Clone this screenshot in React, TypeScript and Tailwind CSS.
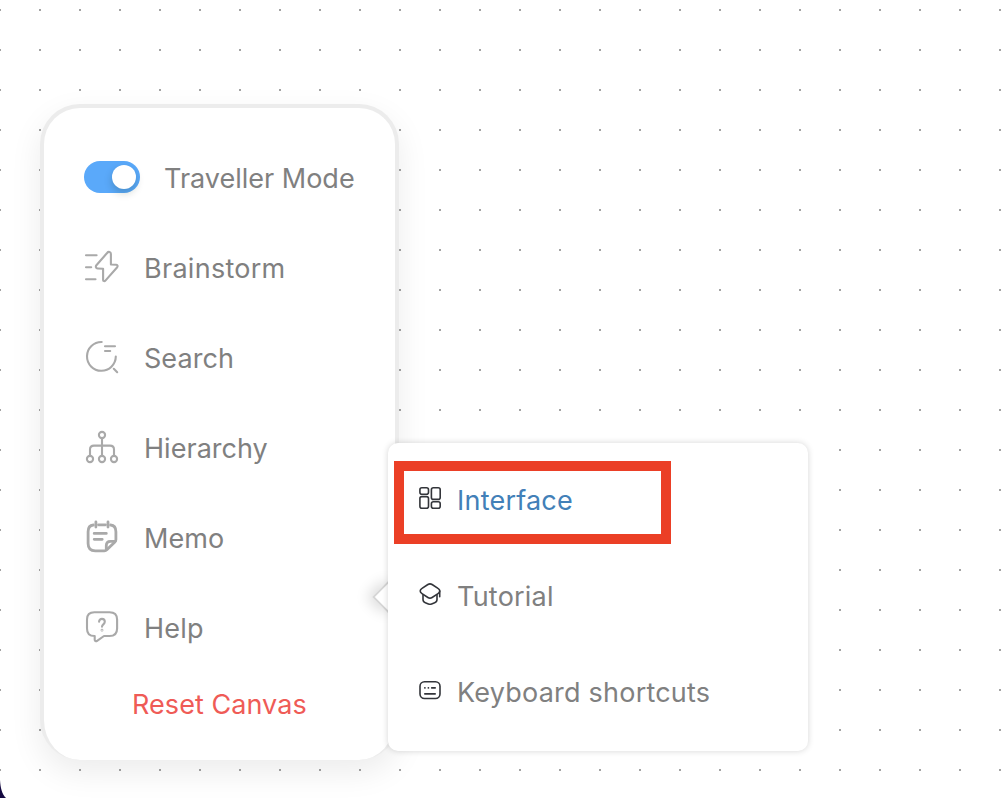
import type { ReactNode } from "react";

function Icon({ children, width = 2.1 }: { children: ReactNode; width?: number }) {
  return (
    <svg
      className="size-9 shrink-0"
      viewBox="0 0 36 36"
      fill="none"
      stroke="#a9a9a9"
      strokeWidth={width}
      strokeLinecap="round"
      strokeLinejoin="round"
    >
      {children}
    </svg>
  );
}

function BrainstormIcon() {
  return (
    <Icon>
      <path d="M2 6.2H12.6M2 18.2H7.2M2 30.2H11.5" />
      <path d="M23.1 4 12.4 16.2C11.4 17.5 11.8 19.4 13.6 19.5L19.1 19.8V31C19.1 32.2 20.6 32.5 21.4 31.6L33 18.5C34 17.3 33.8 15.9 32.2 15.8L26.9 15.5V5C26.9 2.8 24.5 2.2 23.1 4Z" />
    </Icon>
  );
}

function SearchIcon() {
  return (
    <Icon>
      <path d="M17.7 3A14.4 14.4 0 1 0 31.8 17.6" />
      <path d="M21 7.2H31M21 12H26.2M29.8 29.8 33.2 33.2" />
    </Icon>
  );
}

function HierarchyIcon() {
  return (
    <Icon>
      <circle cx="18" cy="6" r="3.1" />
      <circle cx="6" cy="30" r="3.1" />
      <circle cx="18" cy="30" r="3.1" />
      <circle cx="30" cy="30" r="3.1" />
      <path d="M18 9.1V26.9M6 26.9V20.5Q6 16.6 10 16.6H26Q30 16.6 30 20.5V26.9" />
    </Icon>
  );
}

function MemoIcon() {
  return (
    <Icon width={2.8}>
      <g transform="translate(0 0.8)">
        <path d="M11.9 2.2V7.2M24 2.2V7.2M10.2 13.6H22.3M10.2 19.5H18.2" />
        <path d="M14.5 5H21.5M9.3 5.2C5.9 5.5 4.1 8 4.1 12V23.7C4.1 28.7 6.4 31 11.3 31H20.4C21.6 31 22.3 30.5 23.1 29.7L30.9 22.1C31.5 21.5 31.9 20.6 31.9 19.6V12C31.9 8 30 5.5 26.6 5.2" />
        <path d="M22.3 29.8V25.7C22.3 23 23.6 21.5 26.4 21.5H30.9" />
      </g>
    </Icon>
  );
}

function HelpIcon() {
  return (
    <Icon>
      <path d="M10.4 3.2H25.5C30.8 3.2 33.1 5.6 33.1 10.6V19.4C33.1 24.6 30.8 27 25.5 27H20L13.1 31.8C12 32.6 10.7 32 10.7 30.7V27C5.3 27 3 24.6 3 19.4V10.6C3 5.6 5.3 3.2 10.4 3.2Z" />
      <path d="M15.1 12.8C15.1 8.9 20.8 9 20.8 12.8C20.8 15.3 18 15.4 18 17.7" />
      <circle cx="18" cy="21.2" r="0.35" />
    </Icon>
  );
}

function DarkIcon({ children }: { children: ReactNode }) {
  return (
    <svg
      className="size-6 shrink-0"
      viewBox="0 0 24 24"
      fill="none"
      stroke="#33353a"
      strokeWidth="1.6"
      strokeLinecap="round"
      strokeLinejoin="round"
    >
      {children}
    </svg>
  );
}

function InterfaceIcon() {
  return (
    <DarkIcon>
      <rect x="1.9" y="1.7" width="8.6" height="6.5" rx="2" />
      <rect x="13.4" y="1.7" width="8.8" height="11.7" rx="2" />
      <rect x="1.9" y="10.6" width="8.6" height="11.7" rx="2" />
      <rect x="13.4" y="15.7" width="8.8" height="6.6" rx="2" />
    </DarkIcon>
  );
}

function TutorialIcon() {
  return (
    <DarkIcon>
      <path d="M9.9 2.5 4 6.4C1.6 7.9 1.6 10.1 4 11.7L9.9 15.5C11.3 16.4 12.7 16.4 14.1 15.5L20 11.7C22.4 10.1 22.4 7.9 20 6.4L14.1 2.5C12.7 1.6 11.3 1.6 9.9 2.5Z" />
      <path d="M5 12.8V17.5C5 19 5.9 20.2 7.3 20.7L10.4 21.9Q12 22.5 13.6 21.9L16.7 20.7C18.1 20.2 19 19 19 17.5V12.8M21.7 14.8V9" />
    </DarkIcon>
  );
}

function KeyboardIcon() {
  return (
    <DarkIcon>
      <rect x="2" y="3.7" width="20" height="16.8" rx="4.5" />
      <path d="M6.8 9.9H7M10.3 9.9H10.5M13.7 9.9H17.2M6.8 15.9H17.2" />
    </DarkIcon>
  );
}

const items = [
  { icon: <BrainstormIcon />, label: "Brainstorm", cls: "tracking-[0.28px]" },
  { icon: <SearchIcon />, label: "Search", cls: "tracking-[0.05px]" },
  { icon: <HierarchyIcon />, label: "Hierarchy", cls: "tracking-[0.03px]" },
  { icon: <MemoIcon />, label: "Memo", cls: "tracking-[0.05px]" },
  { icon: <HelpIcon />, label: "Help", cls: "tracking-[0.25px]" },
];

const helpItems = [
  { icon: <InterfaceIcon />, label: "Interface", cls: "text-[#4280b8] tracking-[0.22px]" },
  { icon: <TutorialIcon />, label: "Tutorial", cls: "tracking-[0.22px]" },
  { icon: <KeyboardIcon />, label: "Keyboard shortcuts", cls: "tracking-[0.22px]" },
];

export default function App() {
  return (
    <div className="relative h-[798px] w-[1004px] overflow-hidden bg-white font-['Inter',sans-serif] text-[27px] font-[370] leading-9 text-[#808080]">
      <svg className="absolute inset-0 size-full" aria-hidden="true">
        <defs>
          <pattern id="dots" x="-1" y="9" width="40" height="40" patternUnits="userSpaceOnUse">
            <rect width="2" height="2" fill="#a3a3a3" />
          </pattern>
        </defs>
        <rect width="1004" height="798" fill="url(#dots)" />
      </svg>
      <svg className="absolute bottom-0 left-0 h-5 w-2" viewBox="0 0 8 20">
        <path d="M0 2C.5 10 2 16 6 20H0Z" fill="#140940" />
      </svg>

      <nav className="absolute left-10 top-[104px] h-[656px] w-[359px] rounded-[40px] border-x-4 border-t-4 border-[#ececec] bg-white pl-10 pt-[51px] shadow-[0_12px_32px_rgba(0,0,0,0.08)]">
        <div className="flex h-9 items-center">
          <div className="flex h-8 w-14 shrink-0 items-center justify-end rounded-full bg-[#5aa9fa] pr-1">
            <div className="size-6 rounded-full bg-white shadow-[0_4px_8px_rgba(0,35,11,0.2)]" />
          </div>
          <span className="ml-6 mt-[3px] whitespace-nowrap">Traveller Mode</span>
        </div>
        <div className="mt-[54px] flex flex-col gap-[54px]">
          {items.map((item) => (
            <div key={item.label} className="flex h-9 items-center">
              {item.icon}
              <span className={`ml-6 mt-[3px] whitespace-nowrap ${item.cls}`}>{item.label}</span>
            </div>
          ))}
        </div>
        <div className="mt-[42px] pl-12 whitespace-nowrap tracking-[0.06px] text-[#ef5b56]">Reset Canvas</div>
      </nav>

      <div className="absolute left-[377px] top-[585px] size-6 rotate-45 border-2 border-[#d6d6d6] bg-white shadow-[-4px_4px_14px_rgba(0,0,0,0.14)]" />
      <section className="absolute left-[388px] top-[443px] flex h-[308px] w-[420px] flex-col gap-[60px] rounded-[10px] bg-white pl-[30px] pt-[40px] shadow-[0_0_6px_rgba(0,0,0,0.17)]">
        {helpItems.map((item) => (
          <div key={item.label} className="flex h-9 items-center">
            <div className="-mt-[6px] flex">{item.icon}</div>
            <span className={`ml-[15px] whitespace-nowrap ${item.cls}`}>{item.label}</span>
          </div>
        ))}
      </section>
      <div className="absolute left-[394px] top-[461px] h-[83px] w-[277px] border-[10px] border-[#eb3f26]" />
    </div>
  );
}
